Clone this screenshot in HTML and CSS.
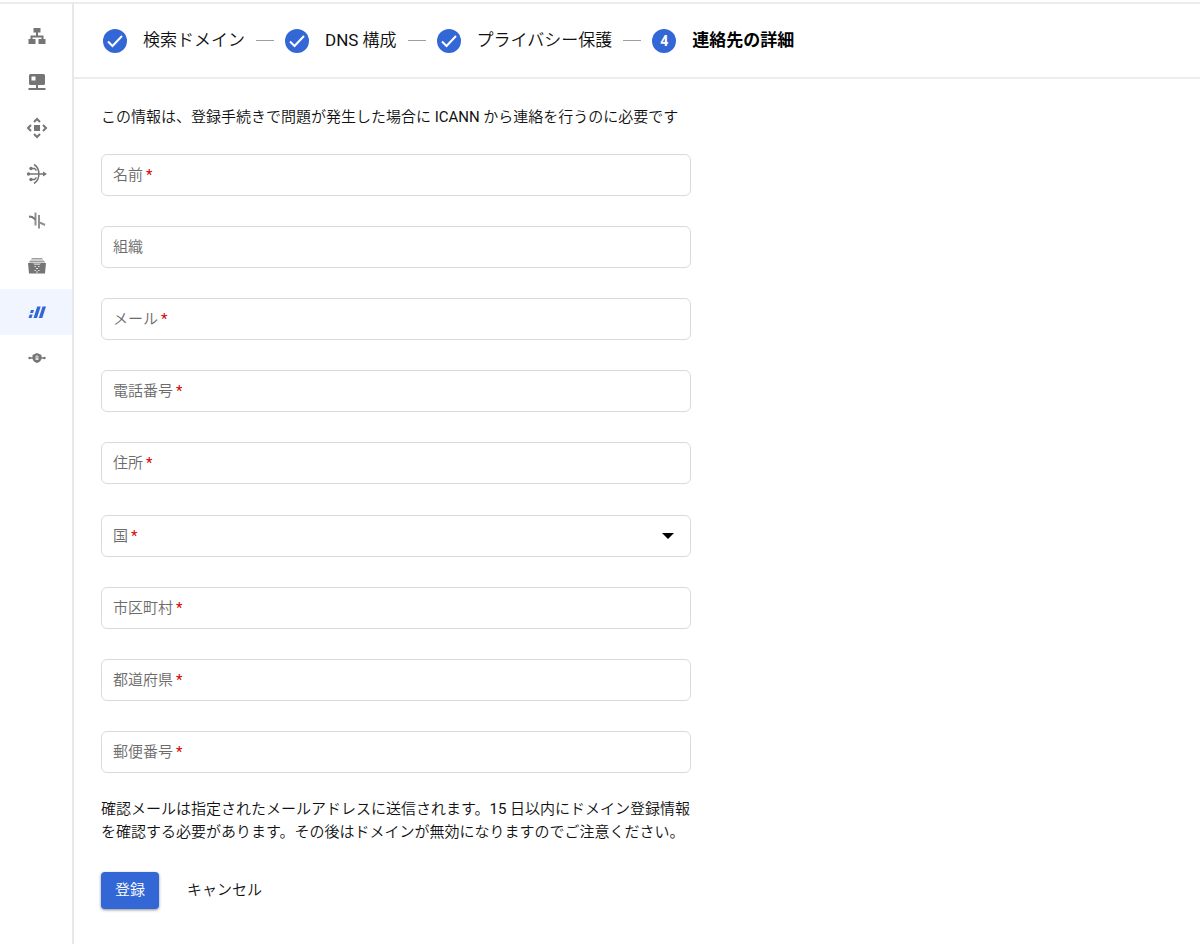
FILE: index.html
```html
<!DOCTYPE html>
<html lang="ja">
<head>
<meta charset="utf-8">
<meta name="viewport" content="width=device-width, initial-scale=1">
<title>連絡先の詳細</title>
<link rel="stylesheet" href="styles.css">
</head>
<body>
<div class="app">
  <nav class="sidebar" aria-label="サービス">
    <a class="nav-item" href="#" aria-label="ネットワーク"><svg class="nav-icon" viewBox="0 0 24 24"><path d="M8.500 4h7v4.500h-2.500v3h5.500V15H20.500v5h-7v-5h3v-1.500h-9V15h3v5h-7v-5h2v-3.500H11v-3H8.500z"/></svg></a>
    <a class="nav-item" href="#" aria-label="サーバー"><svg class="nav-icon" viewBox="0 0 24 24"><path fill-rule="evenodd" d="M5.500 4h13A1.500 1.500 0 0 1 20 5.500v8a1.500 1.500 0 0 1-1.500 1.500H13v3h7.500v2h-17v-2H11v-3H5.500A1.500 1.500 0 0 1 4 13.500v-8A1.500 1.500 0 0 1 5.500 4zM6.500 6.500v4h4v-4z"/></svg></a>
    <a class="nav-item" href="#" aria-label="外部 IP"><svg class="nav-icon" viewBox="0 0 24 24"><path d="M9 9h6v6H9z"/><path class="stroke" d="M9 6l3-3 3 3M9 18l3 3 3-3M6 9l-3 3 3 3M18 9l3 3-3 3"/></svg></a>
    <a class="nav-item" href="#" aria-label="ロード バランシング"><svg class="nav-icon" viewBox="0 0 24 24"><path class="stroke thin" d="M9 2.500c6.500 4 6.500 15 0 19M3 12h17M6 6.500h3.500l2 2M6 17.500h3.500l2-2"/><circle cx="3.500" cy="12" r="1.700"/><circle cx="6" cy="6.500" r="1.700"/><circle cx="6" cy="17.500" r="1.700"/><path d="M18 9.500l4 2.500-4 2.500z"/></svg></a>
    <a class="nav-item" href="#" aria-label="接続"><svg class="nav-icon" viewBox="0 0 24 24"><path class="stroke soft" d="M10.500 4.500v13M14 7v13.500M14 14.500l3 1 3 1.500"/><path class="stroke" d="M4 8.500l3 .5 3.500 2.500"/></svg></a>
    <a class="nav-item" href="#" aria-label="アーカイブ"><svg class="nav-icon" viewBox="0 0 24 24"><path class="pale" d="M7 4h10l1 1.500H6zM5 6.500h14l1 2H4z"/><path d="M3 9h18l-1 10.500H4z"/><path class="paper" d="M8 9.500h8l-1.500 1.200h-5zM9.500 12H11v1H9.500zM13 12h1.500v1H13zM11 14h2v1h-2zM9.500 16H11v1H9.500zM13 16h1.500v1H13zM11 17.500h2v1h-2z"/></svg></a>
    <a class="nav-item active" href="#" aria-label="Cloud Domains" aria-current="page"><svg class="nav-icon" viewBox="0 0 24 24"><path d="M6 10h3l-1 3H5zM4.700 14.500h3L6.500 18h-3zM12.200 6.500h3.500L12 18H8.500zM17.500 6.500H21L17.300 18h-3.500z"/></svg></a>
    <a class="nav-item" href="#" aria-label="セキュリティ"><svg class="nav-icon" viewBox="0 0 24 24"><path class="stroke thin" d="M4 12h4M16 12h4"/><circle cx="4.500" cy="12" r="1.200"/><circle cx="19.500" cy="12" r="1.200"/><path d="M12 7l4.500 2v3c0 2.500-2 4.300-4.500 5-2.500-.7-4.500-2.500-4.500-5V9z"/><path class="paper" d="M10.500 11.500h3v2.500h-3z"/><path class="paper-line" d="M11 11.500V10h2v1.500"/></svg></a>
  </nav>

  <main class="main">
    <ol class="steps">
      <li class="step"><svg class="badge" viewBox="0 0 24 24"><circle cx="12" cy="12" r="12"/><path d="M5 12.500l4.500 4.500L19 7"/></svg>検索ドメイン</li>
      <li class="step"><svg class="badge" viewBox="0 0 24 24"><circle cx="12" cy="12" r="12"/><path d="M5 12.500l4.500 4.500L19 7"/></svg><span><span class="latin">DNS</span> 構成</span></li>
      <li class="step"><svg class="badge" viewBox="0 0 24 24"><circle cx="12" cy="12" r="12"/><path d="M5 12.500l4.500 4.500L19 7"/></svg>プライバシー保護</li>
      <li class="step current" aria-current="step"><span class="badge number">4</span>連絡先の詳細</li>
    </ol>

    <form class="form">
      <p class="note">この情報は、登録手続きで問題が発生した場合に <span class="latin">ICANN</span> から連絡を行うのに必要です</p>
      <fieldset class="group">
        <div class="field"><input id="name" type="text" required><label for="name">名前<span class="req">*</span></label></div>
        <div class="field"><input id="org" type="text"><label for="org">組織</label></div>
        <div class="field"><input id="email" type="email" required><label for="email">メール<span class="req">*</span></label></div>
        <div class="field"><input id="phone" type="tel" required><label for="phone">電話番号<span class="req">*</span></label></div>
        <div class="field"><input id="address" type="text" required><label for="address">住所<span class="req">*</span></label></div>
      </fieldset>
      <fieldset class="group">
        <div class="field"><select id="country" required><option value=""></option></select><label for="country">国<span class="req">*</span></label><svg class="arrow" viewBox="0 0 12 6"><path d="M0 0h12L6 6z"/></svg></div>
        <div class="field"><input id="city" type="text" required><label for="city">市区町村<span class="req">*</span></label></div>
        <div class="field"><input id="pref" type="text" required><label for="pref">都道府県<span class="req">*</span></label></div>
        <div class="field"><input id="zip" type="text" required><label for="zip">郵便番号<span class="req">*</span></label></div>
      </fieldset>
      <p class="note confirm">確認メールは指定されたメールアドレスに送信されます。<span class="latin">15</span> 日以内にドメイン登録情報<br>を確認する必要があります。その後はドメインが無効になりますのでご注意ください。</p>
      <div class="actions">
        <button class="btn primary" type="submit">登録</button>
        <button class="btn" type="button">キャンセル</button>
      </div>
    </form>
  </main>
</div>
</body>
</html>
```

FILE: styles.css
```css
* { box-sizing: border-box; }

body {
  margin: 0;
  background: #fff;
  color: #111;
  font: 350 15px/23px Roboto, "Noto Sans CJK JP", sans-serif;
}

.latin { font-weight: 400; }

.app {
  display: flex;
  min-height: 100vh;
  padding-top: 2px;
}

.sidebar {
  flex: none;
  width: 74px;
  padding-top: 9px;
  border-top: 2px solid #ececec;
  border-right: 2px solid #e8e8e8;
}

.nav-item {
  display: flex;
  align-items: center;
  justify-content: center;
  height: 46px;
  padding-left: 2px;
  color: #757575;
}

.nav-item.active {
  background: #f0f5ff;
  color: #3367d6;
}

.nav-icon {
  width: 24px;
  height: 24px;
  fill: currentColor;
}

.nav-icon .stroke {
  fill: none;
  stroke: currentColor;
  stroke-width: 2;
}

.nav-icon .thin { stroke-width: 1.5; }
.nav-icon .soft { opacity: 0.8; }
.nav-icon .pale { opacity: 0.7; }
.nav-icon .paper { fill: #ddd; }
.nav-icon .paper-line { fill: none; stroke: #ddd; }

.main {
  flex: 1;
  min-width: 0;
  border-top: 2px solid #ececec;
}

.steps {
  display: flex;
  align-items: center;
  margin: 0;
  padding: 24px 29px;
  border-bottom: 2px solid #ececec;
  list-style: none;
  font-size: 17px;
  line-height: 25px;
}

.step {
  display: flex;
  align-items: center;
  white-space: nowrap;
}

.step + .step::before {
  content: "";
  width: 18px;
  margin: 0 11px;
  border-top: 1px solid #9e9e9e;
}

.badge {
  width: 24px;
  height: 24px;
  margin-right: 16px;
  fill: #3367d6;
}

.badge path {
  fill: none;
  stroke: #fff;
  stroke-width: 2;
}

.number {
  border-radius: 50%;
  background: #3367d6;
  color: #fff;
  font-size: 14px;
  line-height: 24px;
  text-align: center;
}

.current {
  color: #000;
  font-weight: 700;
}

.form {
  max-width: 644px;
  padding: 27px;
}

.note { margin: 0; }

.group {
  display: grid;
  gap: 30px;
  min-width: 0;
  margin: 25px 0 0;
  padding: 0;
  border: 0;
}

.group + .group { margin-top: 31px; }

.field {
  display: grid;
  align-items: center;
}

.field > * { grid-area: 1 / 1; }

.field input,
.field select {
  width: 100%;
  height: 42px;
  padding: 0 12px;
  border: 1px solid #dadada;
  border-radius: 6px;
  outline: 0;
  background: #fff;
  color: inherit;
  font: inherit;
  appearance: none;
}

.field label {
  justify-self: start;
  padding-left: 12px;
  color: #6b6b6b;
  pointer-events: none;
}

.req {
  margin-left: 3px;
  color: #d50000;
  font-weight: 400;
}

.arrow {
  justify-self: end;
  width: 12px;
  height: 6px;
  margin-right: 17px;
  pointer-events: none;
}

.confirm {
  margin-top: 25px;
  white-space: nowrap;
}

.actions {
  display: flex;
  gap: 14px;
  margin-top: 28px;
}

.btn {
  height: 37px;
  padding: 0 14px;
  border: 0;
  border-radius: 4px;
  background: transparent;
  color: #111;
  font: inherit;
}

.btn.primary {
  background: #3367d6;
  box-shadow: 0 1px 3px rgba(0, 0, 0, 0.45);
  color: #fff;
}
```
